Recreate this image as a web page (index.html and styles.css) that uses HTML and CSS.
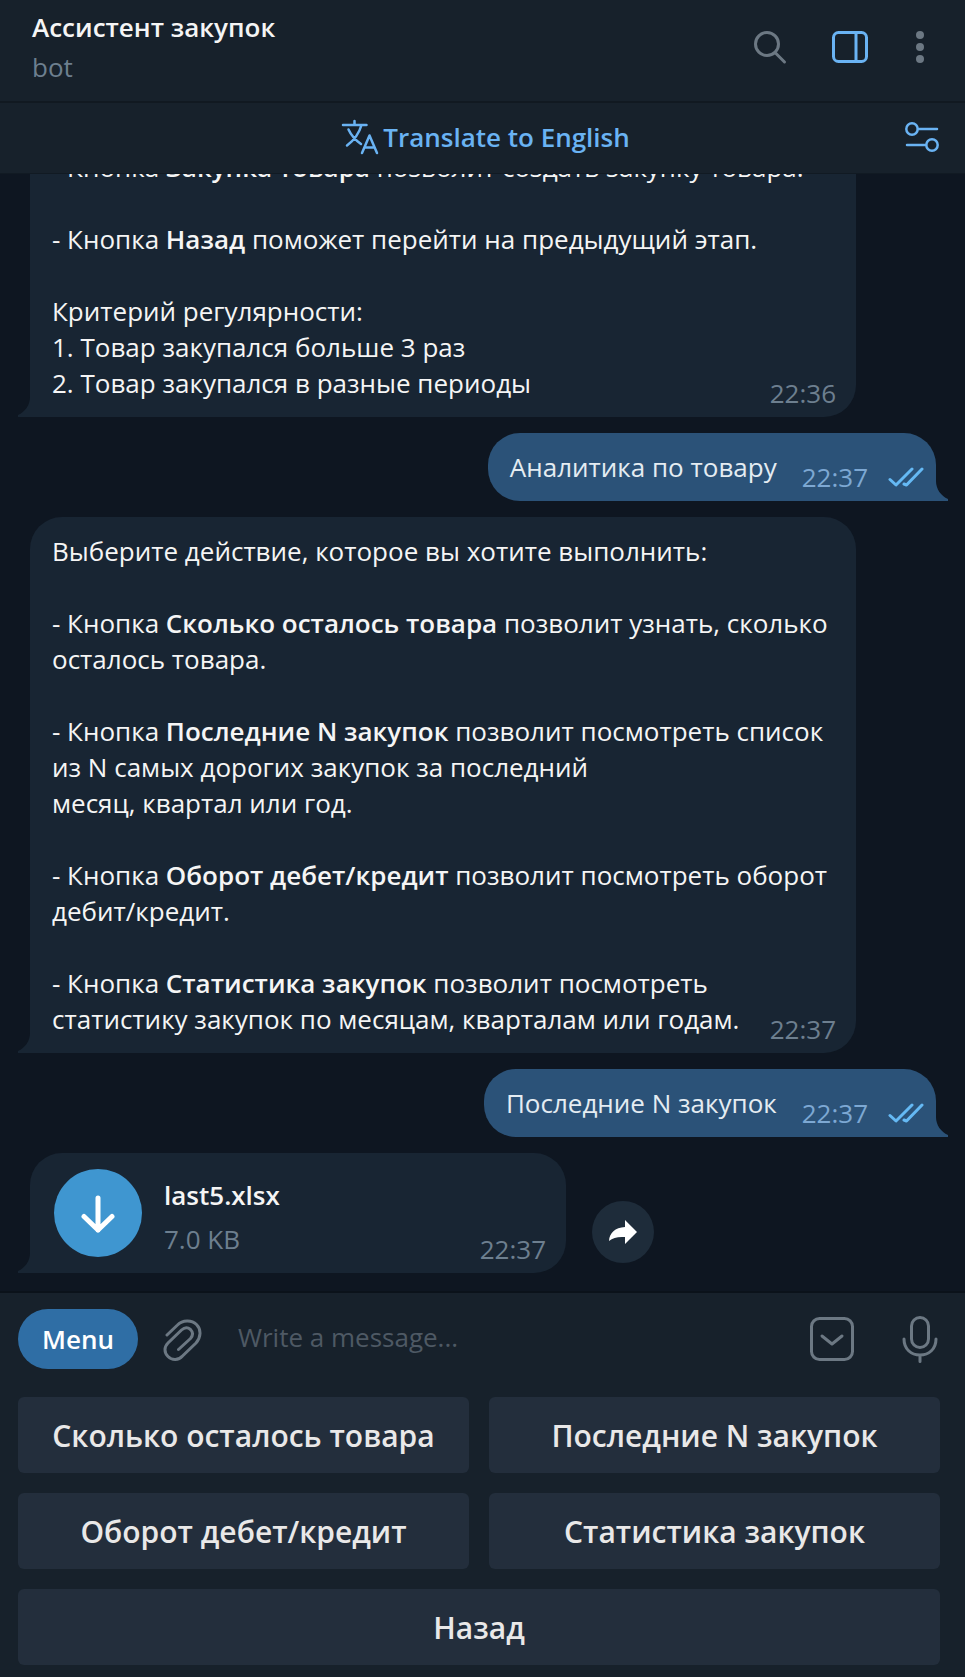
FILE: index.html
```html
<!DOCTYPE html>
<html lang="ru">
<head>
<meta charset="utf-8">
<meta name="viewport" content="width=device-width, initial-scale=1">
<title>Ассистент закупок</title>
<link rel="stylesheet" href="styles.css">
</head>
<body>
<div class="app">
  <header class="topbar">
    <div class="topbar-info">
      <h1 class="topbar-title">Ассистент закупок</h1>
      <p class="topbar-status">bot</p>
    </div>
    <div class="topbar-actions">
      <button class="icon-button" type="button" aria-label="Search">
        <svg class="icon" width="36" height="36" viewBox="0 0 36 36"><circle cx="15" cy="15" r="11.5"/><path d="M23 23.5 L32.5 33"/></svg>
      </button>
      <button class="icon-button icon-active" type="button" aria-label="Side panel">
        <svg class="icon" width="36" height="36" viewBox="0 0 36 36"><rect x="1.500" y="3.500" width="33" height="29" rx="5"/><path d="M24 4 V32"/></svg>
      </button>
      <button class="icon-button more-button" type="button" aria-label="More">
        <svg class="icon-solid" width="8" height="36" viewBox="0 0 8 36"><circle cx="4" cy="6" r="4"/><circle cx="4" cy="18" r="4"/><circle cx="4" cy="30" r="4"/></svg>
      </button>
    </div>
  </header>

  <div class="translate">
    <button class="translate-button" type="button">
      <svg class="icon" width="38" height="36" viewBox="0 0 38 36"><path class="thin" d="M2 6 H25.500 M13.500 2 V6 M20.500 6 C18 15 12 22 6 26.500 M7.500 10.500 C10 16 15 21.500 20 25 M21 34 L28.500 16.500 L36 34 M23.500 28.500 H33.500"/></svg>
      <span>Translate to English</span>
    </button>
    <button class="icon-button icon-active translate-settings" type="button" aria-label="Translation settings">
      <svg class="icon" width="34" height="32" viewBox="0 0 34 32"><g class="thin"><circle cx="7" cy="8" r="5.700"/><path d="M13 8 H32 M2 24 H21"/><circle cx="27" cy="24" r="5.700"/></g></svg>
    </button>
  </div>

  <main class="chat">
    <article class="bubble bubble-in">
      <p class="bubble-text">- Кнопка <b>Закупка товара</b> позволит создать закупку товара.<br><br>- Кнопка <b>Назад</b> поможет перейти на предыдущий этап.<br><br>Критерий регулярности:<br>1. Товар закупался больше 3 раз<br>2. Товар закупался в разные периоды</p>
      <time class="bubble-time">22:36</time>
    </article>

    <article class="bubble bubble-out">
      <p class="bubble-text">Аналитика по товару</p>
      <time class="bubble-time">22:37</time>
      <svg class="checks" width="36" height="20" viewBox="0 0 36 20"><path d="M2 12.500 L8 18 L24 2 M16 17 L18.500 18 L34 2"/></svg>
    </article>

    <article class="bubble bubble-in">
      <p class="bubble-text">Выберите действие, которое вы хотите выполнить:<br><br>- Кнопка <b>Сколько осталось товара</b> позволит узнать, сколько осталось товара.<br><br>- Кнопка <b>Последние N закупок</b> позволит посмотреть список из N самых дорогих закупок за последний<br>месяц, квартал или год.<br><br>- Кнопка <b>Оборот дебет/кредит</b> позволит посмотреть оборот дебит/кредит.<br><br>- Кнопка <b>Статистика закупок</b> позволит посмотреть статистику закупок по месяцам, кварталам или годам.</p>
      <time class="bubble-time">22:37</time>
    </article>

    <article class="bubble bubble-out">
      <p class="bubble-text">Последние N закупок</p>
      <time class="bubble-time">22:37</time>
      <svg class="checks" width="36" height="20" viewBox="0 0 36 20"><path d="M2 12.500 L8 18 L24 2 M16 17 L18.500 18 L34 2"/></svg>
    </article>

    <div class="file-row">
      <article class="bubble bubble-in bubble-file">
        <button class="download" type="button" aria-label="Download last5.xlsx">
          <svg width="40" height="40" viewBox="0 0 40 40"><path d="M20 5 V37 M6 23.500 L20 37 L34 23.500"/></svg>
        </button>
        <div class="file-info">
          <p class="file-name">last5.xlsx</p>
          <p class="file-size">7.0 KB</p>
        </div>
        <time class="bubble-time">22:37</time>
      </article>
      <button class="share" type="button" aria-label="Forward">
        <svg width="30" height="26" viewBox="0 0 30 26"><path d="M17 1 L29 13 L17 25 V18 C10 17.500 5 18.500 1 22 C1.500 14 7 8.500 17 8 Z"/></svg>
      </button>
    </div>
  </main>

  <footer class="bottom">
    <form class="composer">
      <button class="menu-button" type="button">Menu</button>
      <button class="icon-button" type="button" aria-label="Attach file">
        <svg class="icon" width="40" height="44" viewBox="0 0 40 44"><path d="M4 18 L14.500 8 C19.500 3 28.500 2.500 33.500 7.500 C38.500 12.500 38 20.500 33 26 L19.500 39 C15.500 43.500 9 43.500 5 39.500 C1 35.500 1 30 5 26 L18.500 13 C21.500 10.300 25 10.300 27.500 12.500 C30 15 30 18.500 27.500 21.500 L15.500 32.500"/></svg>
      </button>
      <input class="composer-input" type="text" placeholder="Write a message..." aria-label="Write a message">
      <button class="icon-button" type="button" aria-label="Hide keyboard">
        <svg class="icon" width="44" height="44" viewBox="0 0 44 44"><rect x="1.500" y="1.500" width="41" height="41" rx="8"/><path d="M12 19 L22 27 L32 19"/></svg>
      </button>
      <button class="icon-button" type="button" aria-label="Record voice message">
        <svg class="icon" width="36" height="48" viewBox="0 0 36 48"><rect x="9.500" y="2.500" width="17" height="30" rx="8.500"/><path d="M2 24 C2 34 9 40 18 40 C27 40 34 34 34 24 M18 40 V46.500"/></svg>
      </button>
    </form>
    <div class="keyboard">
      <button class="key" type="button">Сколько осталось товара</button>
      <button class="key" type="button">Последние N закупок</button>
      <button class="key" type="button">Оборот дебет/кредит</button>
      <button class="key" type="button">Статистика закупок</button>
      <button class="key key-wide" type="button">Назад</button>
    </div>
  </footer>
</div>
</body>
</html>
```
FILE: styles.css
```css
:root {
  --bar: #17212b;
  --chat: #0e1621;
  --bubble-in: #182533;
  --bubble-out: #2b5278;
  --muted: #6d7f8f;
  --icon: #6c7883;
  --accent: #6ab3f3;
  --text: #f5f5f5;
}

* {
  box-sizing: border-box;
}

body {
  margin: 0;
  background: var(--chat);
  color: var(--text);
  font-family: "Open Sans", "Noto Sans", sans-serif;
  font-size: 26px;
  line-height: 36px;
}

h1,
p {
  margin: 0;
  font-size: inherit;
  font-weight: inherit;
}

b {
  font-weight: 600;
}

button {
  padding: 0;
  border: 0;
  background: none;
  color: inherit;
  font: inherit;
  cursor: pointer;
}

svg {
  display: block;
  fill: none;
  stroke-linecap: round;
  stroke-linejoin: round;
}

.app {
  display: flex;
  flex-direction: column;
  height: 100vh;
}

/* Top bar */

.topbar {
  display: flex;
  justify-content: space-between;
  padding: 7px 41px 14px 32px;
  border-bottom: 2px solid #111921;
  background: var(--bar);
}

.topbar-title {
  font-weight: 600;
  line-height: 40px;
}

.topbar-status {
  color: var(--muted);
  line-height: 40px;
}

.topbar-actions {
  display: flex;
  align-items: center;
  gap: 44px;
}

.icon-button {
  flex: none;
  color: var(--icon);
}

.icon-active {
  color: var(--accent);
}

.more-button {
  margin-left: 4px;
}

.icon {
  stroke: currentColor;
  stroke-width: 3;
}

.icon-solid {
  fill: currentColor;
}

.thin {
  stroke-width: 2.5;
}

/* Translation bar */

.translate {
  display: grid;
  grid-template-columns: 34px 1fr 34px;
  align-items: center;
  height: 70px;
  flex: none;
  padding: 0 26px 2px 32px;
  background: var(--bar);
}

.translate-button {
  display: flex;
  grid-column: 2;
  align-items: center;
  justify-content: center;
  gap: 4px;
  color: var(--accent);
  font-weight: 600;
}

/* Messages */

.chat {
  display: flex;
  flex: 1;
  flex-direction: column;
  justify-content: flex-end;
  align-items: flex-start;
  gap: 16px;
  min-height: 0;
  padding: 0 29px 18px 30px;
  overflow: hidden;
  border-top: 1px solid #111a23;
}

.bubble {
  position: relative;
  flex: none;
  max-width: 826px;
  padding: 16px 20px 16px 22px;
  border-radius: 32px;
}

.bubble::after {
  content: "";
  position: absolute;
  bottom: 0;
  width: 12px;
  height: 20px;
  background: inherit;
}

.bubble-in {
  width: 826px;
  border-bottom-left-radius: 0;
  background: var(--bubble-in);
}

.bubble-in::after {
  right: 100%;
  clip-path: path("M12 0 C12 8 7 15 0 18 V20 H12 Z");
}

.bubble-out {
  display: flex;
  align-self: flex-end;
  padding-right: 12px;
  border-bottom-right-radius: 0;
  background: var(--bubble-out);
  color: #e4ecf2;
}

.bubble-out::after {
  left: 100%;
  clip-path: path("M0 0 C0 8 5 15 12 18 V20 H0 Z");
}

.bubble-time {
  color: var(--muted);
}

.bubble-in .bubble-time {
  position: absolute;
  right: 20px;
  bottom: 6px;
}

.bubble-out .bubble-time {
  align-self: flex-end;
  margin: 0 20px -10px 25px;
  color: #7da8d3;
}

.checks {
  align-self: flex-end;
  margin-bottom: -2px;
  stroke: #65b9f4;
  stroke-width: 3;
}

/* File message */

.file-row {
  display: flex;
  flex: none;
  align-items: flex-end;
  gap: 26px;
}

.bubble-file {
  display: flex;
  align-items: center;
  gap: 22px;
  width: 536px;
  padding: 0 24px;
}

.download {
  display: grid;
  place-items: center;
  width: 88px;
  height: 88px;
  margin: 16px 0;
  border-radius: 50%;
  background: #3f96d0;
}

.download svg {
  stroke: #fff;
  stroke-width: 5;
}

.file-info {
  padding-top: 8px;
}

.file-name {
  font-weight: 600;
  line-height: 44px;
}

.file-size {
  color: var(--muted);
  line-height: 44px;
}

.share {
  display: grid;
  place-items: center;
  width: 62px;
  height: 62px;
  margin-bottom: 10px;
  border-radius: 50%;
  background: #1e2c3a;
}

.share svg {
  fill: #fff;
}

/* Composer and reply keyboard */

.bottom {
  flex: none;
  padding: 16px 25px 12px 18px;
  border-top: 2px solid #0b121a;
  background: var(--bar);
}

.composer {
  display: flex;
  align-items: center;
  margin-bottom: 28px;
}

.menu-button {
  height: 60px;
  margin-right: 25px;
  padding: 0 24px;
  border-radius: 30px;
  background: #2f6ea5;
  color: #fff;
  font-weight: 600;
}

.composer-input {
  flex: 1;
  min-width: 0;
  margin: 0 24px 4px 35px;
  padding: 0;
  border: 0;
  outline: 0;
  background: none;
  color: var(--text);
  font: inherit;
}

.composer-input::placeholder {
  color: #4e5964;
  opacity: 1;
}

.composer .icon-button:last-child {
  margin: 0 2px 0 48px;
}

.keyboard {
  display: grid;
  grid-template-columns: 1fr 1fr;
  gap: 20px;
}

.key {
  height: 76px;
  padding-top: 2px;
  border-radius: 6px;
  background: #232e3c;
  color: #e9e8e8;
  font-size: 30px;
  font-weight: 600;
}

.key-wide {
  grid-column: 1 / -1;
}
```
